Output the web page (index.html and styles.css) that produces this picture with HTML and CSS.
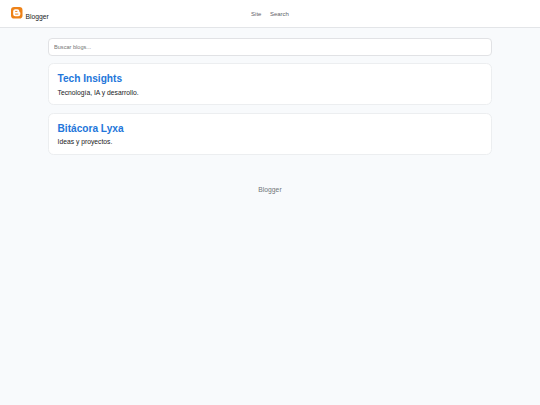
FILE: index.html
```html
<!DOCTYPE html>
<html lang="es">
<head>
<meta charset="utf-8">
<title>Blogger</title>
<link rel="stylesheet" href="styles.css">
</head>
<body>
<header class="header">
  <div class="brand">
    <svg class="logo" viewBox="0 0 24 24" aria-hidden="true">
      <rect width="24" height="24" rx="6.5" fill="#ee8218"/>
      <path fill="#fff" d="M9 4.500h4a4.500 4.500 0 0 1 4.500 4.500v.8c0 .7.400 1 1 1s1 .5 1 1.200V15a4.500 4.500 0 0 1-4.500 4.500H9A4.500 4.500 0 0 1 4.500 15V9A4.500 4.500 0 0 1 9 4.500z"/>
      <path d="M9.500 9.200h3M9.500 14.800h5" stroke="#ee8218" stroke-width="2" stroke-linecap="round"/>
    </svg>
    <span class="brand-name">Blogger</span>
  </div>
  <nav class="nav"><a>Site</a><a>Search</a></nav>
  <div></div>
</header>
<main class="main">
  <input class="search" type="text" placeholder="Buscar blogs...">
  <article class="card">
    <h2>Tech Insights</h2>
    <p>Tecnología, IA y desarrollo.</p>
  </article>
  <article class="card">
    <h2>Bitácora Lyxa</h2>
    <p>Ideas y proyectos.</p>
  </article>
</main>
<footer class="footer">Blogger</footer>
</body>
</html>
```
FILE: styles.css
```css
* {
  box-sizing: border-box;
}

body {
  margin: 0;
  min-height: 100vh;
  background: #f8fafc;
  color: #202124;
  font-family: "Liberation Sans", Arial, sans-serif;
  font-size: 6.75px;
}

.header {
  display: grid;
  grid-template-columns: 1fr auto 1fr;
  height: 28px;
  padding: 0 11px;
  background: #fff;
  border-bottom: 1px solid #e3e5e8;
}

.brand {
  display: flex;
  gap: 3px;
  padding-top: 7px;
}

.logo {
  width: 11.5px;
  height: 11.5px;
}

.brand-name {
  padding-top: 6px;
  line-height: 8px;
}

.nav {
  display: flex;
  gap: 8.5px;
  padding-top: 10px;
  line-height: 8px;
  font-size: 6px;
  color: #5f6368;
}

.main {
  width: 444px;
  margin: 0 auto;
  padding-top: 10px;
}

.search {
  display: block;
  width: 100%;
  height: 17.5px;
  margin-bottom: 7.8px;
  padding: 0 5px;
  border: 1px solid #e1e2e5;
  border-radius: 4px;
  background: #fff;
  font-family: inherit;
  font-size: 5.6px;
}

.card {
  height: 41.7px;
  margin-bottom: 8px;
  padding: 9px 8.5px 0;
  border: 1px solid #eceef0;
  border-radius: 5.5px;
  background: #fff;
}

.card h2 {
  margin: 0 0 3.5px;
  line-height: 12px;
  font-size: 10.15px;
  color: #2376da;
}

.card p {
  margin: 0;
  line-height: 8px;
}

.footer {
  padding-top: 15px;
  text-align: center;
  line-height: 24px;
  color: #70757a;
}
```
